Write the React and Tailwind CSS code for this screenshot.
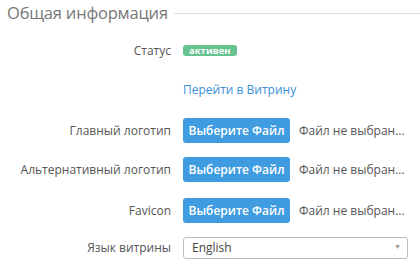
import React from "react";

const font = { fontFamily: '"Open Sans", "Noto Sans", sans-serif' };

function Row({ label, children, className }) {
    return (
        <div className={"flex items-center h-[25px] " + className}>
            <div className="w-[171px] shrink-0 text-right text-[12px] text-[#555] whitespace-nowrap">{label}</div>
            <div className="ml-[12px] flex items-center flex-1 min-w-0">{children}</div>
        </div>
    );
}

function FileRow({ label, className }) {
    return (
        <Row label={label} className={className}>
            <button className="w-[107px] h-[25px] rounded-[3px] bg-[#3f9ce0] text-white text-[12px] font-semibold whitespace-nowrap">
                Выберите Файл
            </button>
            <span className="ml-[9px] text-[12px] text-[#555] whitespace-nowrap">Файл не выбран...</span>
        </Row>
    );
}

export default function App() {
    return (
        <div className="w-[420px] h-[267px] bg-white overflow-hidden" style={font}>
            <div className="flex items-center h-[26px] pl-[7px]">
                <span className="text-[16.5px] tracking-[-0.2px] text-[#777] whitespace-nowrap">Общая информация</span>
                <div className="flex-1 h-px bg-[#ddd] ml-[6px]" />
            </div>
            <Row label="Статус" className="mt-[12px]">
                <span className="h-[11px] leading-[11px] px-[6px] rounded-[3px] bg-[#66c28f] text-white text-[9.5px] font-bold">
                    активен
                </span>
            </Row>
            <Row label="" className="mt-[14px]">
                <a className="text-[12px] text-[#3a8fd9]" href="#">Перейти в Витрину</a>
            </Row>
            <FileRow label="Главный логотип" className="mt-[16px]" />
            <FileRow label="Альтернативный логотип" className="mt-[14px]" />
            <FileRow label="Favicon" className="mt-[16px]" />
            <Row label="Язык витрины" className="mt-[12px]">
                <div className="w-[225px] h-[22px] border border-[#bbb] rounded-[3px] flex items-center justify-between pl-[8px] pr-[6px]">
                    <span className="text-[12px] text-[#444]">English</span>
                    <span className="text-[7px] text-[#999]">▼</span>
                </div>
            </Row>
        </div>
    );
}
